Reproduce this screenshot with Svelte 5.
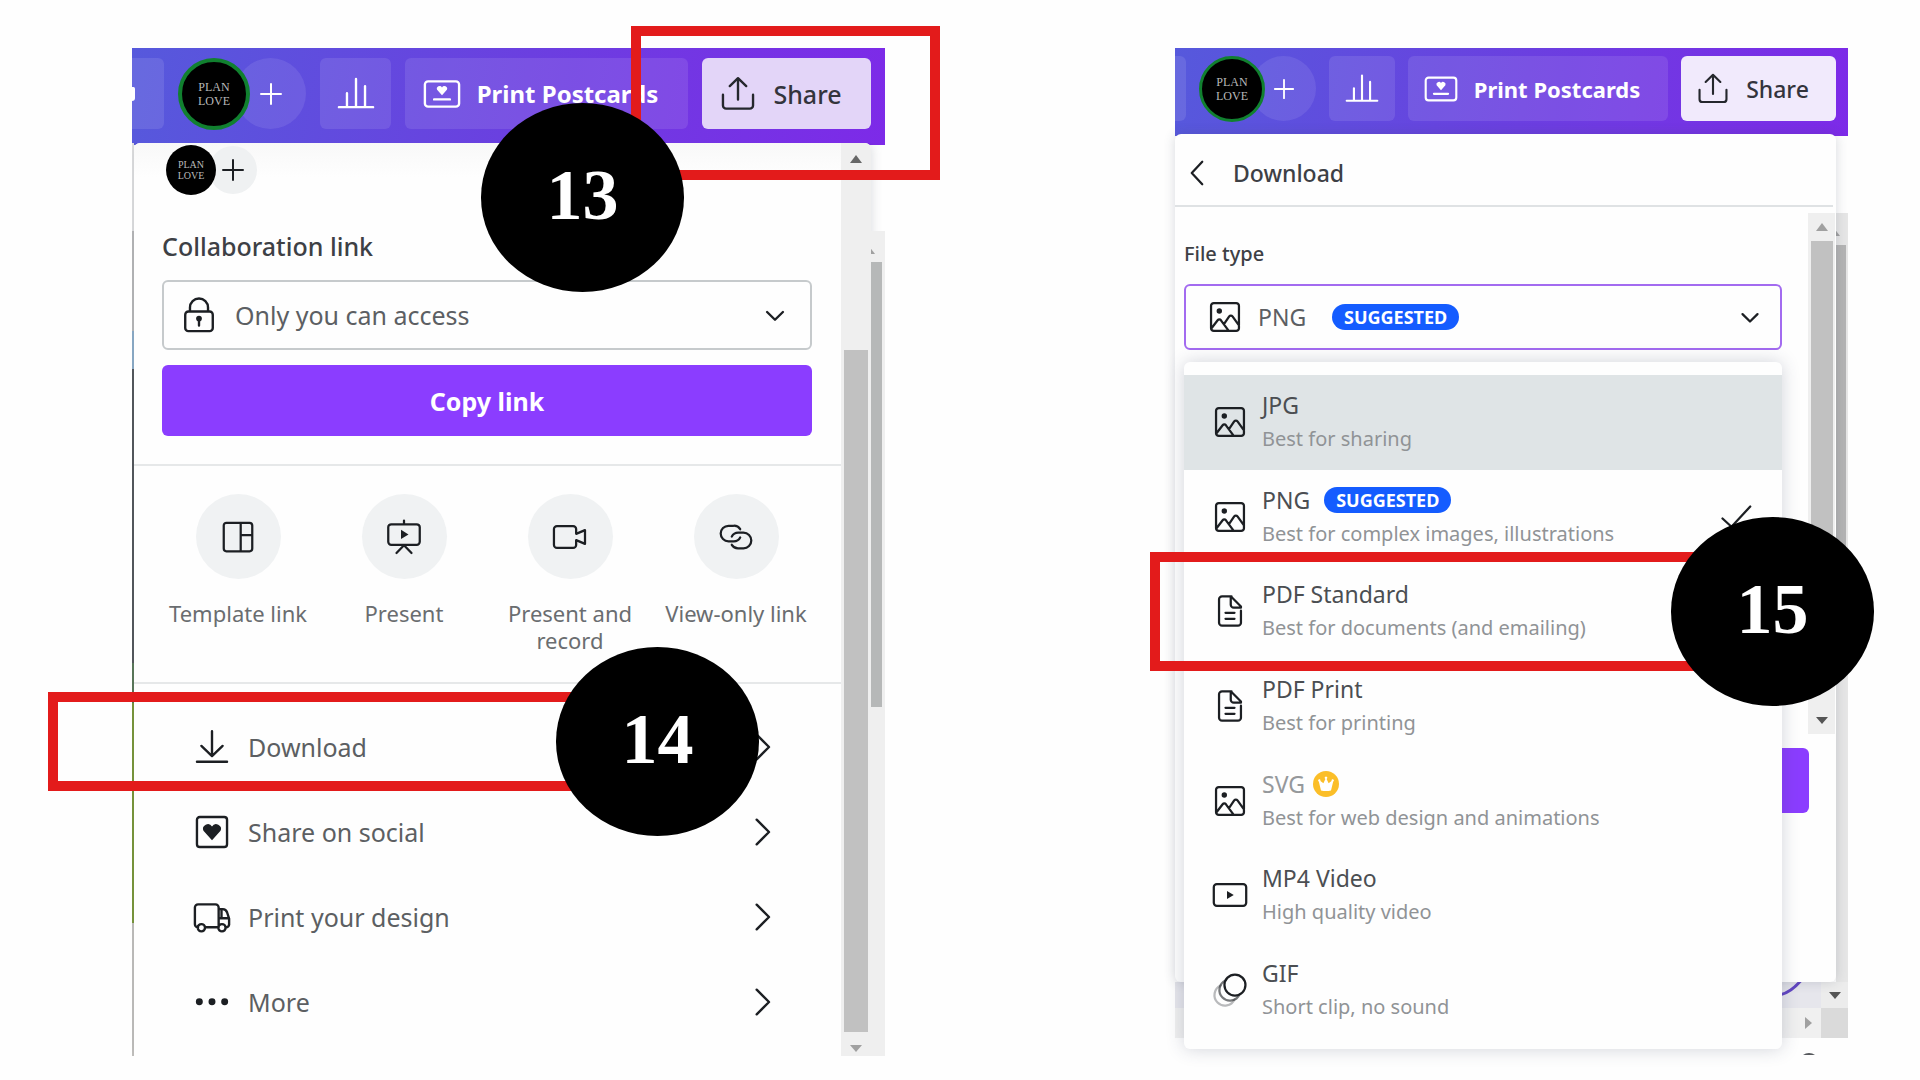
<script lang="ts">
  // Share and download panels side by side, with numbered step markers on top.

  type Icon = { stroke?: string; solid?: string; mid?: string; faint?: string };

  const heart = (x: number, y: number, s: number) =>
    `M${x} ${y + s}L${x - s} ${y - s * 0.1}A${s * 0.56} ${s * 0.56} 0 0 1 ${x} ${y - s * 0.6}A${s * 0.56} ${s * 0.56} 0 0 1 ${x + s} ${y - s * 0.1}Z`;

  const icons: Record<string, Icon> = {
    plus: { stroke: 'M12 2v20M2 12h20' },
    chart: { stroke: 'M1.2 20.3h21.6M6.3 20V11.5M12 20V2.5M17.7 20V7' },
    postcard: {
      stroke:
        'M3.2 4h17.6a2 2 0 0 1 2 2v12a2 2 0 0 1-2 2H3.2a2 2 0 0 1-2-2V6a2 2 0 0 1 2-2zM7 15.4h10',
      solid: heart(12, 9.7, 3.1)
    },
    share: { stroke: 'M2.5 12.5v6.7a2 2 0 0 0 2 2h15a2 2 0 0 0 2-2v-6.7M12 15.5V2M6.8 7 12 2l5.2 5' },
    lock: {
      stroke:
        'M5.3 9.8h13.4a2 2 0 0 1 2 2v8.4a2 2 0 0 1-2 2H5.3a2 2 0 0 1-2-2v-8.4a2 2 0 0 1 2-2zM6.3 9.5V7.3a5.7 5.7 0 0 1 11.4 0v2.2M12 15v3.6',
      solid: 'M12 12.4a1.8 1.8 0 1 0 0 3.6 1.8 1.8 0 0 0 0-3.6z'
    },
    down: { stroke: 'M7 10.1 12 15l5-4.9' },
    right: { stroke: 'M8 4.2 15.8 12 8 19.8' },
    left: { stroke: 'M15.5 4.5 8.5 12l7 7.5' },
    template: {
      stroke:
        'M4.3 2.5h15.4a1.8 1.8 0 0 1 1.8 1.8v15.4a1.8 1.8 0 0 1-1.8 1.8H4.3a1.8 1.8 0 0 1-1.8-1.8V4.3a1.8 1.8 0 0 1 1.8-1.8zM13.8 2.5v19M13.8 10.7h7.7'
    },
    present: {
      stroke:
        'M12 1v2.5M3.5 3.5h17a2 2 0 0 1 2 2v9.7a2 2 0 0 1-2 2h-17a2 2 0 0 1-2-2V5.5a2 2 0 0 1 2-2zM12 17.5l-5 5.2M12 17.5l5 5.2',
      solid: 'M10 7.2v6.2l5-3.1z'
    },
    record: {
      stroke:
        'M3.3 4.7h10.8a2 2 0 0 1 2 2v3.2l5.900-2.500v9.200l-5.900-2.500v3.200a2 2 0 0 1-2 2H3.300a2 2 0 0 1-2-2V6.700a2 2 0 0 1 2-2z'
    },
    link: {
      stroke:
        'M14.8 6.8A4.9 4.9 0 0 0 10.5 4.5H7a5.2 5.2 0 0 0 0 10.4h3.5a4.9 4.9 0 0 0 4.3-2.6M9.2 17.2a4.9 4.9 0 0 0 4.3 2.3H17a5.2 5.2 0 0 0 0-10.4h-3.5a4.9 4.9 0 0 0-4.3 2.6'
    },
    download: { stroke: 'M12 2v15M5.3 11.3 12 17.7l6.700-6.400M2.500 21.300h19' },
    social: {
      stroke:
        'M4.3 2.5h15.4a1.8 1.8 0 0 1 1.8 1.8v15.4a1.8 1.8 0 0 1-1.8 1.8H4.3a1.8 1.8 0 0 1-1.8-1.8V4.3a1.8 1.8 0 0 1 1.8-1.8z',
      solid: heart(12, 11.8, 5.4)
    },
    truck: {
      stroke:
        'M3.2 18.5a2 2 0 0 1-2-2V6a2 2 0 0 1 2-2h11a2 2 0 0 1 2 2v12.5M7.5 18.5h8M16.2 7h2.6a3 3 0 0 1 2.7 2l1.3 4v3.5a2 2 0 0 1-1.5 2M16.5 12.800h6M18 7v5.500M5.300 16.500a2.300 2.300 0 1 0 0 4.600 2.300 2.300 0 0 0 0-4.600zM18.300 16.500a2.300 2.300 0 1 0 0 4.600 2.300 2.300 0 0 0 0-4.600z'
    },
    more: {
      solid:
        'M4 9.7a2.2 2.2 0 1 0 0 4.4 2.2 2.2 0 0 0 0-4.4zM12 9.7a2.2 2.2 0 1 0 0 4.4 2.2 2.2 0 0 0 0-4.4zM20 9.7a2.2 2.2 0 1 0 0 4.4 2.2 2.2 0 0 0 0-4.4z'
    },
    image: {
      stroke:
        'M4.5 2.7h15a1.8 1.8 0 0 1 1.8 1.8v15a1.8 1.8 0 0 1-1.8 1.8h-15a1.8 1.8 0 0 1-1.8-1.8v-15a1.8 1.8 0 0 1 1.8-1.8zM3 19.5l4.1-5.3a1.4 1.4 0 0 1 2.2 0l5.2 7M11.3 16.8l3.500-5.200a1.400 1.400 0 0 1 2.200 0l4.300 6',
      solid: 'M8.2 6.2a1.8 1.8 0 1 0 0 3.6 1.8 1.8 0 0 0 0-3.6z'
    },
    doc: {
      stroke:
        'M13 2.2H6.7a2 2 0 0 0-2 2v15.6a2 2 0 0 0 2 2h10.6a2 2 0 0 0 2-2v-8M12.5 2.2 19.3 9v.8h-4.8a2 2 0 0 1-2-2zM9 13.2h6M9 17.2h6'
    },
    video: {
      stroke:
        'M3.2 4.8h17.6a2 2 0 0 1 2 2v10.4a2 2 0 0 1-2 2H3.2a2 2 0 0 1-2-2V6.8a2 2 0 0 1 2-2z',
      solid: 'M10 9.3v5.4l4.5-2.7z'
    },
    gif: {
      stroke: 'M15.3 1.7a7 7 0 1 0 0 14 7 7 0 0 0 0-14z',
      mid: 'M9 5.7A7 7 0 1 0 18.3 15',
      faint: 'M5.7 9A7 7 0 1 0 15 18.3'
    },
    check: { stroke: 'M3 13l6 5.5L21.5 5' }
  };

  const actions = [
    { icon: 'template', label: 'Template link' },
    { icon: 'present', label: 'Present' },
    { icon: 'record', label: 'Present and record' },
    { icon: 'link', label: 'View-only link' }
  ];

  const menu = [
    { icon: 'download', label: 'Download' },
    { icon: 'social', label: 'Share on social' },
    { icon: 'truck', label: 'Print your design' },
    { icon: 'more', label: 'More' }
  ];

  const fileTypes = [
    { name: 'JPG', icon: 'image', hint: 'Best for sharing' },
    { name: 'PNG', icon: 'image', hint: 'Best for complex images, illustrations', suggested: true },
    { name: 'PDF Standard', icon: 'doc', hint: 'Best for documents (and emailing)' },
    { name: 'PDF Print', icon: 'doc', hint: 'Best for printing' },
    { name: 'SVG', icon: 'image', hint: 'Best for web design and animations', pro: true },
    { name: 'MP4 Video', icon: 'video', hint: 'High quality video' },
    { name: 'GIF', icon: 'gif', hint: 'Short clip, no sound' }
  ];

  let fileType = $state('PNG');
  let hovered = $state('JPG');
</script>

{#snippet icon(name: string)}
  <svg class="icon i-{name}" viewBox="0 0 24 24" aria-hidden="true">
    {#if icons[name].faint}<path class="line faint" d={icons[name].faint} />{/if}
    {#if icons[name].mid}<path class="line mid" d={icons[name].mid} />{/if}
    {#if icons[name].stroke}<path class="line" d={icons[name].stroke} />{/if}
    {#if icons[name].solid}<path class="solid" d={icons[name].solid} />{/if}
  </svg>
{/snippet}

{#snippet avatar()}
  <span class="avatar"><span>PLAN</span><span>LOVE</span></span>
{/snippet}

{#snippet topbar()}
  <header class="topbar">
    <span class="chip stub"></span>
    <div class="people">
      {@render avatar()}
      <button type="button" class="add" aria-label="Add people">{@render icon('plus')}</button>
    </div>
    <button type="button" class="chip square" aria-label="Insights">{@render icon('chart')}</button>
    <button type="button" class="chip print">{@render icon('postcard')}Print Postcards</button>
    <button type="button" class="chip share">{@render icon('share')}Share</button>
  </header>
{/snippet}

<main>
  <section class="shot share-shot">
    {@render topbar()}
    <div class="stage">
      <div class="edge"></div>
      <div class="panel">
        <div class="content">
          <div class="people small">
            {@render avatar()}
            <button type="button" class="add" aria-label="Add people">{@render icon('plus')}</button>
          </div>
          <div class="link-form">
            <label for="access">Collaboration link</label>
            <div class="field">
              {@render icon('lock')}
              <select id="access"><option>Only you can access</option></select>
              {@render icon('down')}
            </div>
            <button type="button" class="copy">Copy link</button>
          </div>
          <div class="actions">
            {#each actions as a}
              <button type="button" class="action">
                <span class="disc">{@render icon(a.icon)}</span>
                {a.label}
              </button>
            {/each}
          </div>
          <nav>
            {#each menu as m}
              <button type="button" class="row">
                {@render icon(m.icon)}<span>{m.label}</span>{@render icon('right')}
              </button>
            {/each}
          </nav>
        </div>
        <div class="bar">
          <i class="tri up"></i>
          <div class="thumb"></div>
          <i class="tri dn pale"></i>
        </div>
      </div>
      <div class="outer">
        <i class="tri up pale"></i>
        <div class="thumb"></div>
      </div>
    </div>

    <div class="frame frame-13"></div>
    <div class="frame frame-14"></div>
    <div class="step step-13">13</div>
    <div class="step step-14">14</div>
  </section>

  <section class="shot download-shot">
    {@render topbar()}
    <div class="stage">
      <div class="panel">
        <div class="title">
          <button type="button" class="back" aria-label="Back">{@render icon('left')}</button>
          <h2>Download</h2>
        </div>
        <div class="scroller">
          <div class="form">
            <label for="filetype">File type</label>
            <div class="field">
              {@render icon('image')}
              <select id="filetype" bind:value={fileType}>
                {#each fileTypes as t}<option>{t.name}</option>{/each}
              </select>
              <span class="badge">SUGGESTED</span>
              {@render icon('down')}

              <div class="options" role="listbox" aria-label="File type">
                {#each fileTypes as t}
                  <button
                    type="button"
                    role="option"
                    class="option"
                    class:active={hovered === t.name}
                    class:locked={t.pro}
                    aria-selected={fileType === t.name}
                    onmouseenter={() => (hovered = t.name)}
                    onclick={() => (fileType = t.name)}
                  >
                    {@render icon(t.icon)}
                    <span class="text">
                      <span class="name">
                        {t.name}
                        {#if t.suggested}<span class="badge">SUGGESTED</span>{/if}
                        {#if t.pro}
                          <svg class="crown" viewBox="0 0 26 26" aria-hidden="true">
                            <circle cx="13" cy="13" r="13" fill="#fbbe28" />
                            <path
                              fill="#fff"
                              d="M8 19.5 5.8 10.5a1.2 1.2 0 1 1 1.6-.6l3 2.3 2-4.2a1.3 1.3 0 1 1 1.2 0l2 4.2 3-2.3a1.2 1.2 0 1 1 1.6.6L18 19.5q-5 1.2-10 0z"
                            />
                          </svg>
                        {/if}
                      </span>
                      <span class="hint">{t.hint}</span>
                    </span>
                    {#if fileType === t.name}{@render icon('check')}{/if}
                  </button>
                {/each}
              </div>
            </div>
          </div>
          <div class="bar">
            <i class="tri up pale"></i>
            <div class="thumb"></div>
            <i class="tri dn"></i>
          </div>
        </div>
        <div class="foot"><button type="button" class="submit" aria-label="Download"></button></div>
      </div>
      <div class="outer">
        <i class="tri up pale"></i>
        <div class="thumb"></div>
      </div>
    </div>
    <div class="canvas-end">
      <div class="canvas">
        <svg viewBox="0 0 40 26" aria-hidden="true"><path d="M0 12.5Q11 10 22-4" /></svg>
      </div>
      <div class="cap"><i class="tri dn"></i></div>
    </div>
    <div class="hbar">
      <i class="tri rt pale"></i>
      <div class="corner"></div>
    </div>
    <div class="status"><i class="help"></i></div>

    <div class="frame frame-15"></div>
    <div class="step step-15">15</div>
  </section>
</main>

<style>
  :global(body) {
    background: #fefefe;
  }
  main {
    display: grid;
    grid-template-columns: 753fr 673fr;
    column-gap: 16.9%;
    align-items: start;
    padding: 48px 3.75% 24px 6.875%;
    font-family: 'Noto Sans', 'Open Sans', sans-serif;
    color: #4b4e52;
    overflow: hidden;
  }
  button,
  select {
    font: inherit;
    color: inherit;
    border: 0;
    background: none;
    padding: 0;
    margin: 0;
    cursor: pointer;
  }
  .shot {
    position: relative;
    min-width: 0;
  }
  .icon {
    width: 38px;
    height: 38px;
    flex: none;
    color: #1c1f23;
    overflow: visible;
  }
  .line {
    fill: none;
    stroke: currentColor;
    stroke-width: 1.5;
    stroke-linecap: round;
    stroke-linejoin: round;
  }
  .solid {
    fill: currentColor;
  }
  .mid {
    opacity: 0.6;
  }
  .faint {
    opacity: 0.3;
  }

  /* top bar */
  .topbar {
    display: flex;
    gap: 14px;
    box-sizing: border-box;
    height: 97px;
    padding: 10px 14px 16px 0;
    background: linear-gradient(100deg, #5659dc, #6b3fe0 52%, #7d2ae8);
    color: #fff;
    font-size: 24px;
    font-weight: 700;
  }
  .chip {
    display: flex;
    align-items: center;
    justify-content: center;
    box-sizing: border-box;
    height: 71px;
    border-radius: 6px;
    background: rgba(255, 255, 255, 0.1);
    white-space: nowrap;
  }
  .stub {
    justify-content: flex-start;
    width: 32px;
    border-radius: 0 6px 6px 0;
  }
  .share-shot .stub::before {
    content: '';
    width: 3px;
    height: 14px;
    border-radius: 0 3px 6px 0;
    background: #fff;
  }
  .square {
    width: 71px;
  }
  .print {
    flex: 1;
    gap: 16px;
    padding-right: 12px;
  }
  .share {
    width: 169px;
    gap: 16px;
    padding-right: 12px;
    background: #e3d5f8;
    color: #33343c;
    font-size: 25px;
    font-weight: 500;
  }
  .topbar .icon {
    color: #fff;
  }
  .topbar .i-share {
    color: #25272d;
  }
  .people {
    display: flex;
    align-items: center;
  }
  .avatar {
    z-index: 1;
    box-sizing: border-box;
    display: flex;
    flex-direction: column;
    align-items: center;
    justify-content: center;
    width: 72px;
    height: 72px;
    border: 4px solid #11802f;
    border-radius: 50%;
    background: #000;
    color: #b9b9b9;
    font: 12px/14px 'Liberation Serif', serif;
  }
  .add {
    display: flex;
    align-items: center;
    justify-content: center;
    width: 71px;
    height: 71px;
    margin-left: -15px;
    border-radius: 50%;
    background: rgba(255, 255, 255, 0.09);
  }
  .add .icon {
    width: 24px;
    height: 24px;
  }
  .add .line {
    stroke-width: 2;
  }

  /* scrollbars */
  .bar,
  .outer {
    display: flex;
    flex-direction: column;
    align-items: center;
    background: #efefef;
  }
  .thumb {
    background: #c1c1c1;
  }
  .tri {
    flex: none;
    border: 6px solid transparent;
  }
  .up {
    border-top: 0;
    border-bottom: 8px solid #666;
  }
  .dn {
    border-bottom: 0;
    border-top: 7px solid #555;
  }
  .rt {
    border-right: 0;
    border-left: 7px solid #a0a0a0;
  }
  .up.pale {
    border-bottom-color: #a0a0a0;
  }
  .dn.pale {
    border-top-color: #a0a0a0;
  }

  /* share panel */
  .stage {
    position: relative;
    display: flex;
    margin-top: -2px;
  }
  .edge {
    width: 2px;
    background: linear-gradient(
      #e4e4e4 0 88px,
      #bbb 88px 188px,
      #8fb0cc 188px 226px,
      #55585c 226px 520px,
      #5c7a58 520px 560px,
      #7c9a38 560px 780px,
      #c6c4c0 780px
    );
  }
  .panel {
    flex: 1;
    min-width: 0;
    border-radius: 6px 6px 0 0;
    background: #fefefe;
    box-shadow: 0 0 12px rgba(60, 70, 90, 0.2);
  }
  .share-shot .panel {
    display: flex;
  }
  .share-shot .stage {
    overflow: hidden;
  }
  .content {
    flex: 1;
    min-width: 0;
    padding-top: 2px;
    border-radius: 6px 0 0 0;
    background: linear-gradient(#f8f8f8, #fefefe 34px);
  }
  .small {
    padding-left: 32px;
  }
  .small .avatar {
    width: 50px;
    height: 50px;
    border: 0;
    font-size: 10px;
    line-height: 11px;
  }
  .small .add {
    width: 48px;
    height: 48px;
    margin-left: -7px;
    background: #eff1f2;
  }
  .link-form {
    padding: 33px 29px 28px 28px;
    border-bottom: 2px solid #e6e8e9;
  }
  label {
    display: block;
    color: #3d4045;
    font-weight: 500;
  }
  .link-form label {
    font-size: 25px;
    line-height: 36px;
    margin-bottom: 16px;
  }
  .field {
    position: relative;
    display: flex;
    align-items: center;
    box-sizing: border-box;
    height: 70px;
    border: 2px solid #c6cacc;
    border-radius: 6px;
    color: #5c5f63;
    font-size: 25px;
  }
  .field select {
    position: absolute;
    inset: 0;
    width: 100%;
    padding-left: 71px;
    appearance: none;
  }
  .field > .icon {
    z-index: 1;
    margin-left: 16px;
    pointer-events: none;
  }
  .field > .i-down {
    margin: 0 16px 0 auto;
  }
  .copy {
    width: 100%;
    height: 71px;
    margin-top: 15px;
    border-radius: 6px;
    background: #8b3dff;
    color: #fff;
    font-size: 25px;
    font-weight: 700;
  }
  .actions {
    display: grid;
    grid-template-columns: repeat(4, 1fr);
    padding: 28px 22px 28px 21px;
    border-bottom: 2px solid #e6e8e9;
  }
  .action {
    display: flex;
    flex-direction: column;
    align-items: center;
    color: #6a6d70;
    font-size: 22px;
    line-height: 27px;
  }
  .disc {
    display: grid;
    place-items: center;
    width: 85px;
    height: 85px;
    margin-bottom: 21px;
    border-radius: 50%;
    background: #f0f2f3;
  }
  .disc .icon {
    width: 36px;
    height: 36px;
  }
  nav {
    padding: 20px 0 12px;
  }
  .row {
    display: flex;
    align-items: center;
    gap: 17px;
    width: 100%;
    height: 85px;
    padding: 0 59px;
    color: #5c5f62;
    font-size: 25px;
    text-align: left;
  }
  .row span {
    flex: 1;
  }
  .share-shot .bar {
    width: 30px;
    box-sizing: border-box;
    padding: 12px 0 4px;
    border-radius: 0 6px 0 0;
  }
  .share-shot .bar .thumb {
    flex: 1;
    width: 24px;
    margin: 187px 0 13px;
  }
  .share-shot .outer {
    width: 14px;
    margin-top: 88px;
    align-items: flex-start;
    overflow: hidden;
  }
  .outer .tri {
    margin: 15px 0 0 -8px;
  }
  .share-shot .outer .thumb {
    width: 11px;
    height: 445px;
    margin-top: 8px;
    background: #b6b8b8;
  }

  /* download panel */
  .download-shot .topbar {
    gap: 13px;
    height: 88px;
    padding: 8px 12px 15px 0;
    font-size: 22px;
  }
  .download-shot .chip {
    height: 65px;
  }
  .download-shot .stub {
    width: 11px;
  }
  .download-shot .square {
    width: 66px;
  }
  .download-shot .share {
    width: 155px;
    background: #f1eafc;
    font-size: 23px;
  }
  .download-shot .avatar {
    width: 66px;
    height: 66px;
    border-width: 3px;
  }
  .download-shot .add {
    width: 65px;
    height: 65px;
    margin-left: -14px;
  }
  .download-shot .icon {
    width: 36px;
    height: 36px;
  }
  .download-shot .chip .icon {
    width: 34px;
    height: 34px;
  }
  .download-shot .add .icon {
    width: 22px;
    height: 22px;
  }
  .download-shot .panel {
    position: relative;
    z-index: 1;
    border-radius: 6px;
  }
  .title {
    display: flex;
    align-items: center;
    height: 73px;
    margin-right: 3px;
    padding: 6px 0 0 4px;
    box-sizing: border-box;
    border-bottom: 2px solid #dfe2e4;
  }
  .back {
    height: 36px;
    margin-right: 18px;
  }
  h2 {
    margin: 0;
    color: #3d4045;
    font-size: 23px;
    font-weight: 500;
  }
  .scroller {
    display: flex;
    height: 527px;
    background: #fefefe;
  }
  .form {
    flex: 1;
    padding: 33px 26px 0 9px;
  }
  .form label {
    font-size: 20px;
    line-height: 28px;
    margin-bottom: 16px;
  }
  .download-shot .field {
    height: 66px;
    border-color: #a36bf0;
    font-size: 23px;
  }
  .download-shot .field > .i-image {
    margin-left: 21px;
  }
  .download-shot .field select {
    padding-left: 72px;
  }
  .badge {
    display: inline-flex;
    align-items: center;
    height: 26px;
    padding: 0 12px;
    border-radius: 13px;
    background: #145cff;
    color: #fff;
    font-size: 18px;
    font-weight: 700;
    pointer-events: none;
  }
  .field > .badge {
    z-index: 1;
    margin-left: 89px;
  }
  .download-shot .field > .i-down {
    margin-right: 12px;
  }
  .options {
    position: absolute;
    z-index: 2;
    top: 76px;
    left: -2px;
    right: -2px;
    display: grid;
    grid-auto-rows: 1fr;
    box-sizing: border-box;
    height: 687px;
    padding: 13px 0 12px;
    border-radius: 6px;
    background: #fefefe;
    box-shadow: 0 0 18px rgba(50, 60, 90, 0.22);
  }
  .option {
    display: flex;
    align-items: center;
    gap: 14px;
    padding: 0 28px;
    color: #4b4e52;
    text-align: left;
  }
  .option.active {
    background: #dfe4e6;
  }
  .text {
    flex: 1;
    display: flex;
    flex-direction: column;
  }
  .name {
    display: flex;
    align-items: center;
    gap: 14px;
    font-size: 23px;
    line-height: 34px;
  }
  .locked .name {
    gap: 8px;
    color: #95989b;
  }
  .hint {
    color: #909396;
    font-size: 20px;
    line-height: 34px;
  }
  .crown {
    width: 26px;
    height: 26px;
  }
  .download-shot .bar {
    width: 27px;
    margin-top: 6px;
    padding-top: 10px;
    margin-right: 1px;
    box-sizing: border-box;
  }
  .download-shot .bar .thumb {
    width: 22px;
    height: 400px;
    margin: 10px 0 auto;
  }
  .download-shot .bar .dn {
    margin-bottom: 10px;
  }
  .foot {
    height: 234px;
    padding: 14px 27px 0 9px;
  }
  .submit {
    width: 100%;
    height: 65px;
    border-radius: 6px;
    background: #8b3dff;
  }
  .download-shot .outer {
    width: 12px;
    margin-top: 79px;
    align-items: flex-start;
    background: #e6e6e6;
    overflow: hidden;
  }
  .download-shot .outer .thumb {
    width: 10px;
    height: 400px;
    margin-top: 9px;
    background: #b4b4b4;
  }
  .canvas-end {
    display: flex;
    height: 26px;
  }
  .canvas {
    flex: 1;
    display: flex;
    justify-content: flex-end;
    background: #e6e6ec;
  }
  .canvas svg {
    width: 40px;
    height: 26px;
  }
  .canvas path {
    fill: none;
    stroke: #6246c4;
    stroke-width: 3;
  }
  .cap {
    width: 27px;
    display: flex;
    align-items: center;
    justify-content: center;
    background: #ececec;
  }
  .hbar {
    display: flex;
    align-items: center;
    justify-content: flex-end;
    height: 30px;
    background: #f0f0f0;
  }
  .corner {
    width: 27px;
    height: 30px;
    margin-left: 9px;
    background: #dadada;
  }
  .status {
    display: flex;
    justify-content: flex-end;
    height: 17px;
    padding-right: 29px;
    overflow: hidden;
  }
  .help {
    width: 20px;
    height: 20px;
    margin-top: 15px;
    border-radius: 50%;
    background: #55585c;
  }

  /* step markers */
  .frame {
    position: absolute;
    box-sizing: border-box;
    border: 10px solid #e31b1b;
    pointer-events: none;
  }
  .frame-13 {
    top: -22px;
    left: 499px;
    width: 309px;
    height: 154px;
  }
  .frame-14 {
    top: 644px;
    left: -84px;
    width: 600px;
    height: 99px;
  }
  .frame-15 {
    z-index: 2;
    top: 504px;
    left: -25px;
    width: 600px;
    height: 119px;
  }
  .step {
    position: absolute;
    z-index: 3;
    display: flex;
    align-items: center;
    justify-content: center;
    box-sizing: border-box;
    width: 203px;
    height: 189px;
    padding-bottom: 6px;
    border-radius: 50%;
    background: #000;
    color: #fff;
    font: 700 72px/1 'Liberation Serif', serif;
  }
  .step-13 {
    top: 55px;
    left: 349px;
  }
  .step-14 {
    top: 599px;
    left: 424px;
  }
  .step-15 {
    top: 469px;
    left: 496px;
  }
</style>
